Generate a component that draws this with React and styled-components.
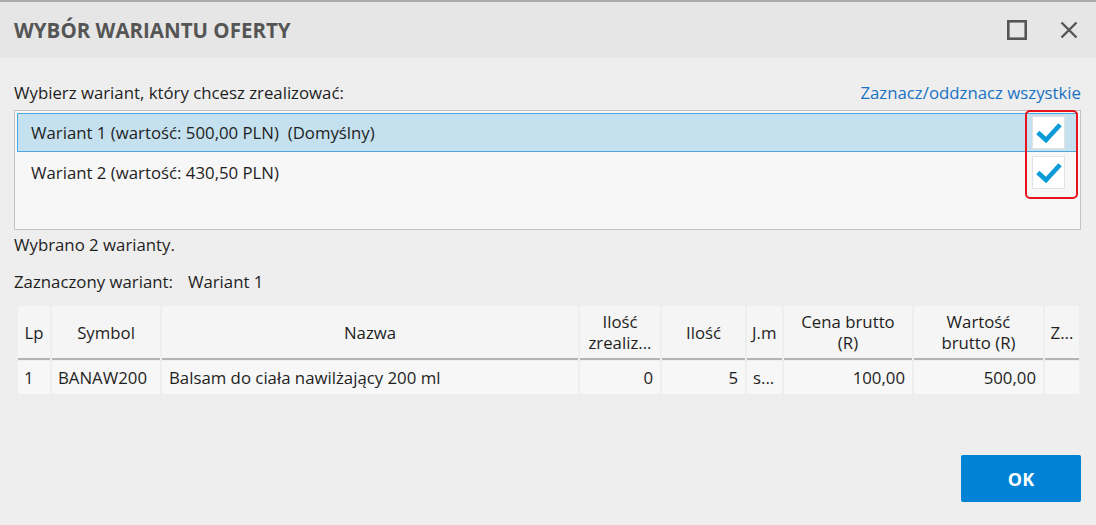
import React from 'react';
import styled, { createGlobalStyle } from 'styled-components';

const Global = createGlobalStyle`
  html, body { margin: 0; padding: 0; background: #eeeeee; }
  body { font-family: "Open Sans", "Noto Sans", sans-serif; color: #1e1e1e; }
`;

const Dialog = styled.div`
  width: 1096px;
  height: 525px;
  box-sizing: border-box;
  border-top: 2px solid #a9a9a9;
  background: #eeeeee;
  display: flex;
  flex-direction: column;
`;

const Header = styled.div`
  height: 56px;
  background: #e6e6e6;
  display: flex;
  align-items: center;
  justify-content: space-between;
  padding: 0 18px 0 14px;
`;

const Title = styled.h1`
  margin: 0;
  font-size: 20.5px;
  font-weight: 700;
  color: #555555;
`;

const HeaderIcons = styled.div`
  display: flex;
  align-items: center;
  gap: 33px;
`;

const Body = styled.div`
  flex: 1;
  padding: 22px 15px 0 14px;
  display: flex;
  flex-direction: column;
`;

const LabelRow = styled.div`
  display: flex;
  justify-content: space-between;
  align-items: center;
  font-size: 16.8px;
  height: 24px;
`;

const Link = styled.a`
  color: #1a72c4;
  text-decoration: none;
  cursor: pointer;
`;

const ListBox = styled.div`
  margin-top: 6px;
  height: 120px;
  box-sizing: border-box;
  border: 1px solid #c2c2c2;
  background: #f7f7f7;
  padding: 2px 2px 0 2px;
  position: relative;
`;

const Row = styled.div`
  height: ${p => (p.$first ? 39 : 41)}px;
  box-sizing: border-box;
  display: flex;
  align-items: center;
  justify-content: space-between;
  padding: 0 12px 0 13px;
  font-size: 16.8px;
  background: ${p => (p.$selected ? '#c5e1ef' : 'transparent')};
  border: 1px solid ${p => (p.$selected ? '#4ea6dc' : 'transparent')};
`;

const Check = styled.div`
  width: 33px;
  height: 33px;
  box-sizing: border-box;
  background: #ffffff;
  border: 1px solid #e2e2e2;
  display: flex;
  align-items: center;
  justify-content: center;
`;

const Highlight = styled.div`
  position: absolute;
  right: 2px;
  top: -1px;
  width: 53px;
  height: 89px;
  box-sizing: border-box;
  border: 2px solid #e8141b;
  border-radius: 5px;
  pointer-events: none;
`;

const Info = styled.div`
  font-size: 16.8px;
  margin-top: ${p => p.$mt}px;
  height: 22px;
  display: flex;
  align-items: center;
  gap: ${p => p.$gap || 0}px;
`;

const Table = styled.div`
  margin: 14px 0 0 4px;
  display: grid;
  grid-template-columns: 32px 108px 416px 80px 83px 35px 128px 129px 34px;
  column-gap: 2px;
  font-size: 16.8px;
`;

const Th = styled.div`
  height: 54px;
  background: #f5f5f5;
  border-bottom: 2px solid #b4b4b4;
  display: flex;
  align-items: center;
  justify-content: ${p => p.$align || 'center'};
  text-align: center;
  line-height: 21px;
  padding: 0 ${p => p.$pad ?? 6}px;
  box-sizing: border-box;
  overflow: hidden;
  white-space: ${p => (p.$nowrap ? 'nowrap' : 'normal')};
`;

const Td = styled.div`
  height: 33px;
  margin-top: 1px;
  background: #f7f7f7;
  display: flex;
  align-items: center;
  justify-content: ${p => p.$align || 'flex-start'};
  padding: 0 ${p => p.$pad ?? 7}px;
  box-sizing: border-box;
  overflow: hidden;
  white-space: nowrap;
`;

const Footer = styled.div`
  margin-top: auto;
  padding-bottom: 23px;
  display: flex;
  justify-content: flex-end;
`;

const OkButton = styled.button`
  width: 120px;
  height: 47px;
  border: none;
  border-radius: 2px;
  background: #0082d7;
  color: #ffffff;
  font-family: inherit;
  font-size: 18px;
  font-weight: 700;
  cursor: pointer;
`;

const CheckMark = () => (
  <svg width="26" height="22" viewBox="0 0 26 22">
    <path d="M3.5 12 L10 18 L22.5 4.5" fill="none" stroke="#0a9ad8" strokeWidth="4.6" strokeLinecap="square" strokeLinejoin="miter" />
  </svg>
);

const rows = [
  { text: 'Wariant 1 (wartość: 500,00 PLN)  (Domyślny)', selected: true },
  { text: 'Wariant 2 (wartość: 430,50 PLN)', selected: false },
];

export default function App() {
  return (
    <>
      <Global />
      <Dialog>
        <Header>
          <Title>WYBÓR WARIANTU OFERTY</Title>
          <HeaderIcons>
            <svg width="20" height="20" viewBox="0 0 20 20">
              <rect x="1.3" y="1.3" width="17.4" height="17.4" fill="none" stroke="#555" strokeWidth="2.6" />
            </svg>
            <svg width="18" height="18" viewBox="0 0 18 18">
              <path d="M1.5 1.5 L16.5 16.5 M16.5 1.5 L1.5 16.5" stroke="#555" strokeWidth="2.4" />
            </svg>
          </HeaderIcons>
        </Header>
        <Body>
          <LabelRow>
            <span>Wybierz wariant, który chcesz zrealizować:</span>
            <Link>Zaznacz/oddznacz wszystkie</Link>
          </LabelRow>
          <ListBox>
            {rows.map((r, i) => (
              <Row key={i} $selected={r.selected} $first={i === 0}>
                <span style={{ whiteSpace: 'pre' }}>{r.text}</span>
                <Check><CheckMark /></Check>
              </Row>
            ))}
            <Highlight />
          </ListBox>
          <Info $mt={3}>Wybrano 2 warianty.</Info>
          <Info $mt={15} $gap={15}>
            <span>Zaznaczony wariant:</span>
            <span>Wariant 1</span>
          </Info>
          <Table>
            <Th $pad={4}>Lp</Th>
            <Th>Symbol</Th>
            <Th>Nazwa</Th>
            <Th $pad={3}>Ilość<br />zrealiz...</Th>
            <Th>Ilość</Th>
            <Th $pad={5} $align="flex-start" $nowrap>J.m</Th>
            <Th>Cena brutto<br />(R)</Th>
            <Th>Wartość<br />brutto (R)</Th>
            <Th $pad={4}>Z...</Th>

            <Td $pad={6}>1</Td>
            <Td $pad={6}>BANAW200</Td>
            <Td>Balsam do ciała nawilżający 200 ml</Td>
            <Td $align="flex-end">0</Td>
            <Td $align="flex-end">5</Td>
            <Td $pad={6}>s...</Td>
            <Td $align="flex-end">100,00</Td>
            <Td $align="flex-end">500,00</Td>
            <Td />
          </Table>
          <Footer>
            <OkButton>OK</OkButton>
          </Footer>
        </Body>
      </Dialog>
    </>
  );
}
